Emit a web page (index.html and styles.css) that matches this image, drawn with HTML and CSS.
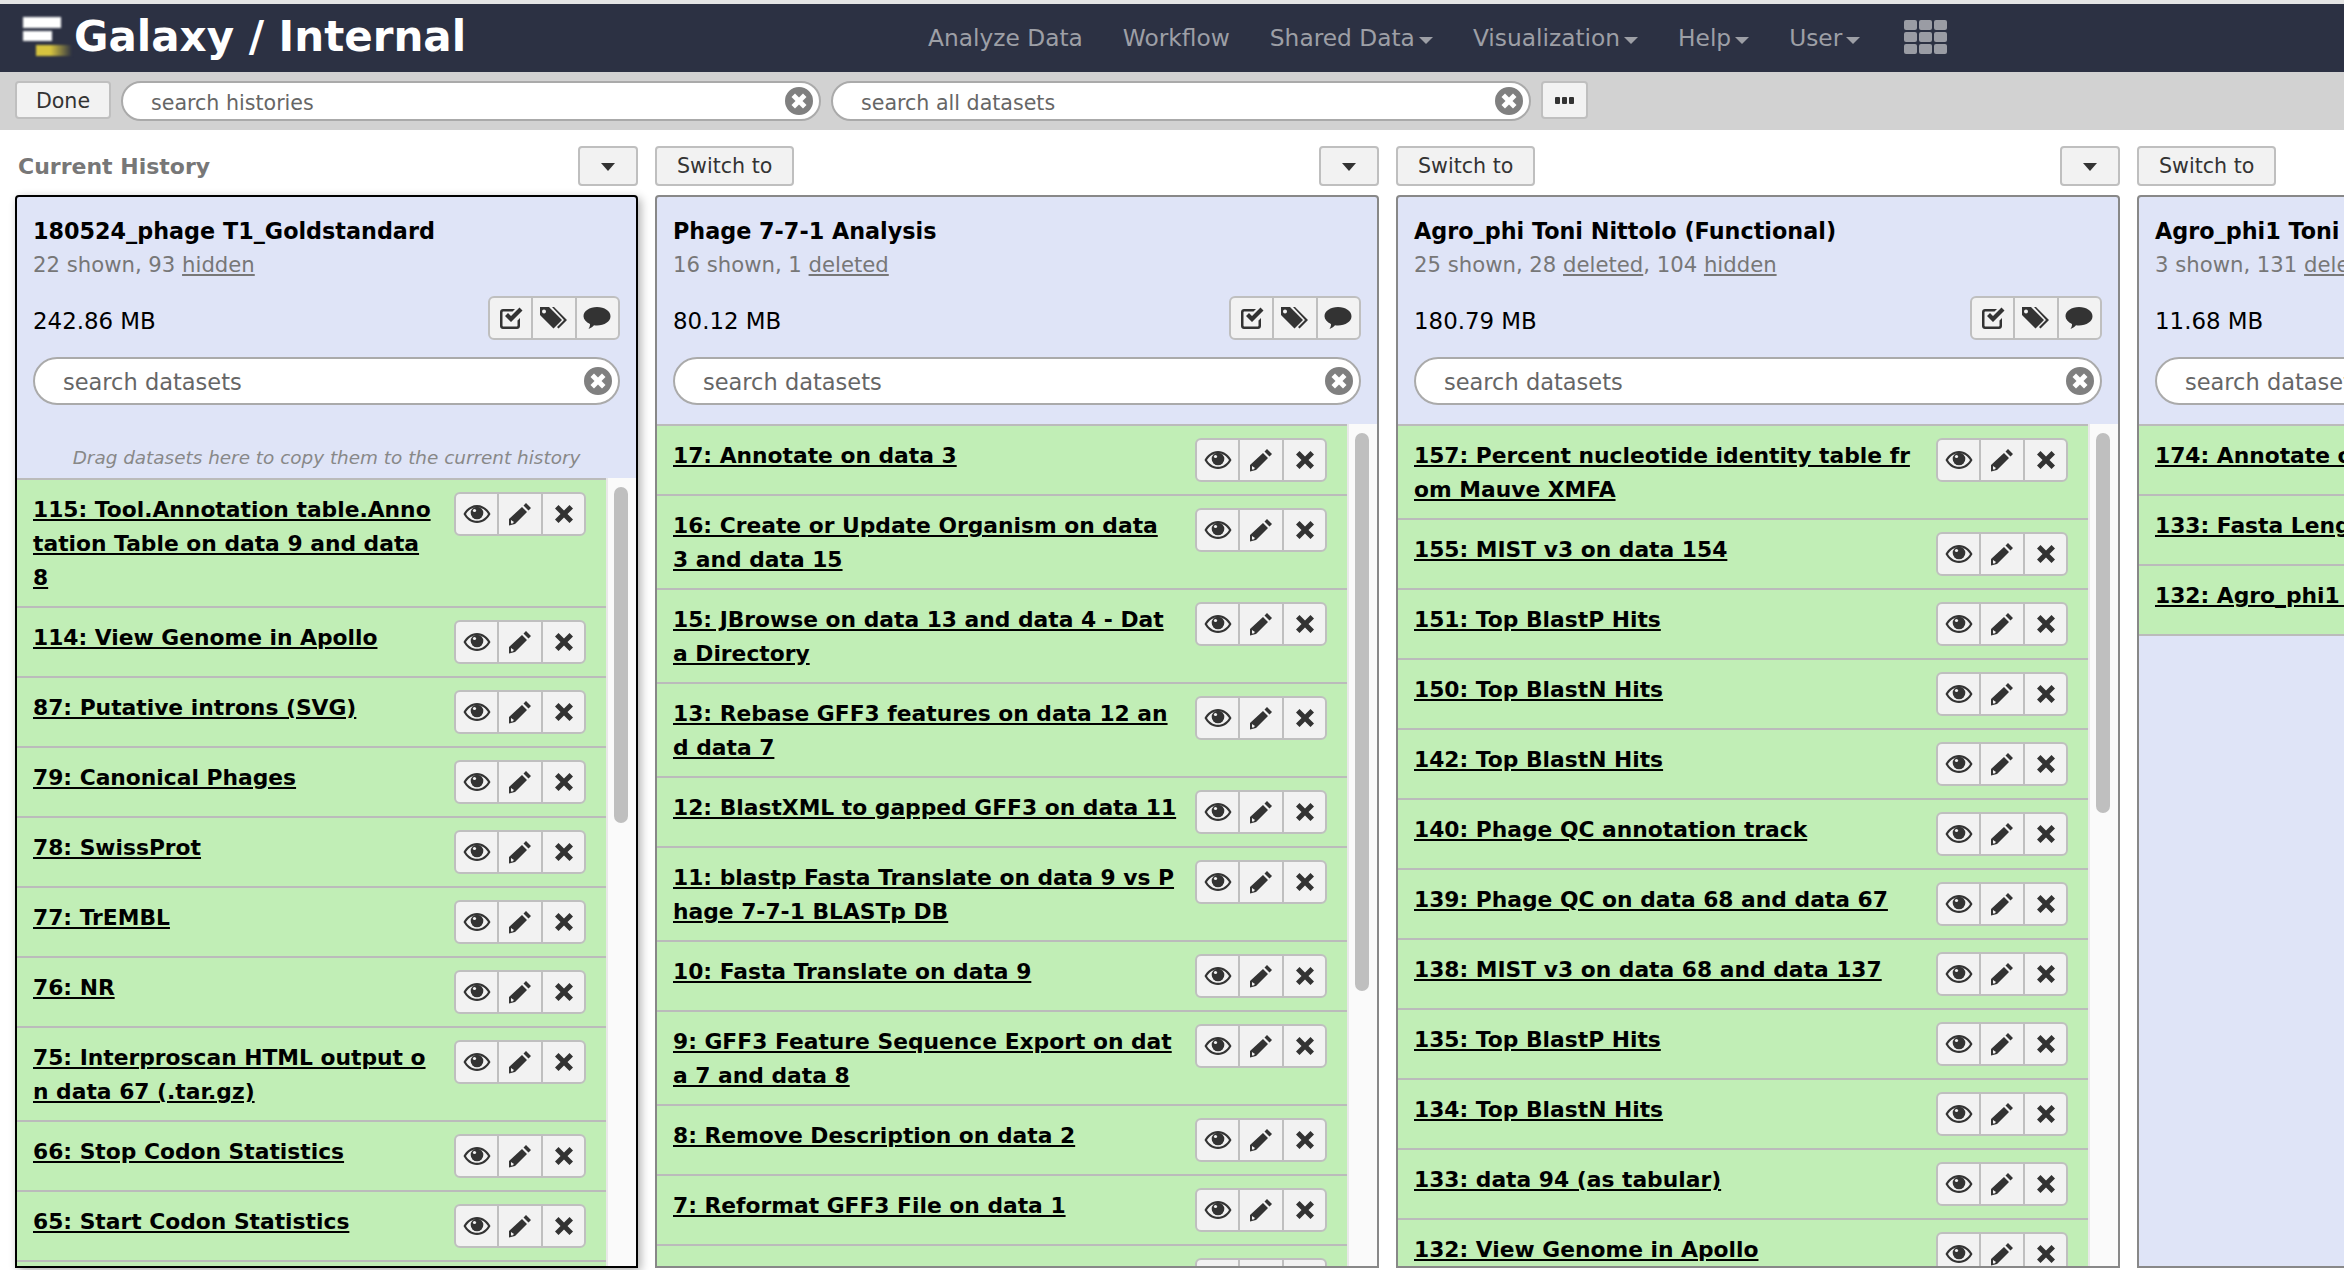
FILE: index.html
```html
<!DOCTYPE html>
<html>
  <head>
    <title>Galaxy / Internal</title>
    <link rel="stylesheet" href="styles.css">
  </head>
  <body>
    <svg class="defs" width="0" height="0">
      <symbol id="i-eye" viewBox="0 0 28 20"><path d="M14 1C8 1 3 5 .5 10 3 15 8 19 14 19s11-4 13.500-9C25 5 20 1 14 1zm0 2.200c5 0 8.800 3 11 6.800-2.200 3.800-6 6.800-11 6.800S5.200 13.800 3 10c2.200-3.800 6-6.800 11-6.800z"/><circle cx="14" cy="9" r="6.300"/><circle cx="11.500" cy="6.500" r="1.600" fill="#f2f2f2"/></symbol>
      <symbol id="i-pencil" viewBox="0 0 24 24"><path d="M18 1l5 5-2.500 2.500-5-5zM14 5l5 5L7 22l-6 1.500V17zM3 18v3.500h1.500l1.500-1.500z"/></symbol>
      <symbol id="i-x" viewBox="0 0 20 20"><path d="M4.500 1L10 6.500 15.500 1 19 4.500 13.500 10l5.500 5.500-3.500 3.500L10 13.500 4.500 19 1 15.500 6.500 10 1 4.500z"/></symbol>
      <symbol id="i-check" viewBox="0 0 24 24"><path d="M4 3h12l-2.500 2.500H4.500c-.6 0-1 .4-1 1v13c0 .6.4 1 1 1h13c.6 0 1-.4 1-1v-5l2.500-2.500v8c0 1.700-1.300 3-3 3H4c-1.700 0-3-1.300-3-3V6c0-1.700 1.300-3 3-3z"/><path d="M6 10l3-3 3 3L20.500 1.500l3 3L12 16z"/></symbol>
      <symbol id="i-tags" viewBox="0 0 30 24"><path d="M1 1h9l13 13-8.500 8.500L1 9zm4 2.500a2 2 0 100 4 2 2 0 000-4z"/><path d="M13 1h2l13 13-8.500 8.500-1.500-1.500 7-7z"/></symbol>
      <symbol id="i-comment" viewBox="0 0 28 24"><path d="M14 1c7.500 0 13.500 4 13.500 9.200S21.500 19.500 14 19.500c-1 0-2 0-3-.2-1.500 1.700-3.500 3-5.500 3.700 1-1.500 1.500-3 1.500-5C3 16 .5 13.300.5 10.200.5 5 6.500 1 14 1z"/></symbol>
      <symbol id="i-clear" viewBox="0 0 28 28"><path fill-rule="evenodd" d="M14 0a14 14 0 110 28 14 14 0 010-28zM10 6.500L6.500 10l4 4-4 4 3.500 3.500 4-4 4 4 3.500-3.500-4-4 4-4L18 6.500l-4 4z"/></symbol>
    </svg>

    <header class="masthead">
      <a class="brand">
        <span class="logo"><i class="bar1"></i><i class="bar2"></i><i class="bar3"></i></span>
        <span class="brand-text">Galaxy / Internal</span>
      </a>
      <nav class="nav">
        <a>Analyze Data</a>
        <a>Workflow</a>
        <a class="drop">Shared Data</a>
        <a class="drop">Visualization</a>
        <a class="drop">Help</a>
        <a class="drop">User</a>
        <span class="grid-icon"><i></i><i></i><i></i><i></i><i></i><i></i><i></i><i></i><i></i></span>
      </nav>
    </header>

    <div class="toolbar">
      <button class="btn done">Done</button>
      <div class="search top-search"><span>search histories</span><svg class="clear"><use href="#i-clear"/></svg></div>
      <div class="search top-search"><span>search all datasets</span><svg class="clear"><use href="#i-clear"/></svg></div>
      <button class="btn dots"><i></i><i></i><i></i></button>
    </div>

    <main class="columns">
      <section class="column first">
        <div class="col-head"><span class="current">Current History</span><button class="btn caret"></button></div>
        <div class="panel active">
          <div class="panel-head">
            <h3>180524_phage T1_Goldstandard</h3>
            <p class="counts">22 shown, 93 <u>hidden</u></p>
            <div class="size-row"><span>242.86 MB</span><div class="acts wide"><b><svg class="i-c"><use href="#i-check"/></svg></b><b><svg class="i-t"><use href="#i-tags"/></svg></b><b><svg class="i-m"><use href="#i-comment"/></svg></b></div></div>
            <div class="search"><span>search datasets</span><svg class="clear"><use href="#i-clear"/></svg></div>
          </div>
          <p class="drag-note">Drag datasets here to copy them to the current history</p>
          <div class="list-wrap">
            <ul class="list">
              <li><a>115: Tool.Annotation table.Anno<br>tation Table on data 9 and data<br>8</a><div class="acts"><b><svg class="i-e"><use href="#i-eye"/></svg></b><b><svg class="i-p"><use href="#i-pencil"/></svg></b><b><svg class="i-x"><use href="#i-x"/></svg></b></div></li>
              <li><a>114: View Genome in Apollo</a><div class="acts"><b><svg class="i-e"><use href="#i-eye"/></svg></b><b><svg class="i-p"><use href="#i-pencil"/></svg></b><b><svg class="i-x"><use href="#i-x"/></svg></b></div></li>
              <li><a>87: Putative introns (SVG)</a><div class="acts"><b><svg class="i-e"><use href="#i-eye"/></svg></b><b><svg class="i-p"><use href="#i-pencil"/></svg></b><b><svg class="i-x"><use href="#i-x"/></svg></b></div></li>
              <li><a>79: Canonical Phages</a><div class="acts"><b><svg class="i-e"><use href="#i-eye"/></svg></b><b><svg class="i-p"><use href="#i-pencil"/></svg></b><b><svg class="i-x"><use href="#i-x"/></svg></b></div></li>
              <li><a>78: SwissProt</a><div class="acts"><b><svg class="i-e"><use href="#i-eye"/></svg></b><b><svg class="i-p"><use href="#i-pencil"/></svg></b><b><svg class="i-x"><use href="#i-x"/></svg></b></div></li>
              <li><a>77: TrEMBL</a><div class="acts"><b><svg class="i-e"><use href="#i-eye"/></svg></b><b><svg class="i-p"><use href="#i-pencil"/></svg></b><b><svg class="i-x"><use href="#i-x"/></svg></b></div></li>
              <li><a>76: NR</a><div class="acts"><b><svg class="i-e"><use href="#i-eye"/></svg></b><b><svg class="i-p"><use href="#i-pencil"/></svg></b><b><svg class="i-x"><use href="#i-x"/></svg></b></div></li>
              <li><a>75: Interproscan HTML output o<br>n data 67 (.tar.gz)</a><div class="acts"><b><svg class="i-e"><use href="#i-eye"/></svg></b><b><svg class="i-p"><use href="#i-pencil"/></svg></b><b><svg class="i-x"><use href="#i-x"/></svg></b></div></li>
              <li><a>66: Stop Codon Statistics</a><div class="acts"><b><svg class="i-e"><use href="#i-eye"/></svg></b><b><svg class="i-p"><use href="#i-pencil"/></svg></b><b><svg class="i-x"><use href="#i-x"/></svg></b></div></li>
              <li><a>65: Start Codon Statistics</a><div class="acts"><b><svg class="i-e"><use href="#i-eye"/></svg></b><b><svg class="i-p"><use href="#i-pencil"/></svg></b><b><svg class="i-x"><use href="#i-x"/></svg></b></div></li>
            </ul>
            <div class="track"><div class="thumb t1"></div></div>
          </div>
        </div>
      </section>

      <section class="column">
        <div class="col-head"><button class="btn">Switch to</button><button class="btn caret"></button></div>
        <div class="panel">
          <div class="panel-head">
            <h3>Phage 7-7-1 Analysis</h3>
            <p class="counts">16 shown, 1 <u>deleted</u></p>
            <div class="size-row"><span>80.12 MB</span><div class="acts wide"><b><svg class="i-c"><use href="#i-check"/></svg></b><b><svg class="i-t"><use href="#i-tags"/></svg></b><b><svg class="i-m"><use href="#i-comment"/></svg></b></div></div>
            <div class="search"><span>search datasets</span><svg class="clear"><use href="#i-clear"/></svg></div>
          </div>
          <div class="list-wrap">
            <ul class="list">
              <li><a>17: Annotate on data 3</a><div class="acts"><b><svg class="i-e"><use href="#i-eye"/></svg></b><b><svg class="i-p"><use href="#i-pencil"/></svg></b><b><svg class="i-x"><use href="#i-x"/></svg></b></div></li>
              <li><a>16: Create or Update Organism on data<br>3 and data 15</a><div class="acts"><b><svg class="i-e"><use href="#i-eye"/></svg></b><b><svg class="i-p"><use href="#i-pencil"/></svg></b><b><svg class="i-x"><use href="#i-x"/></svg></b></div></li>
              <li><a>15: JBrowse on data 13 and data 4 - Dat<br>a Directory</a><div class="acts"><b><svg class="i-e"><use href="#i-eye"/></svg></b><b><svg class="i-p"><use href="#i-pencil"/></svg></b><b><svg class="i-x"><use href="#i-x"/></svg></b></div></li>
              <li><a>13: Rebase GFF3 features on data 12 an<br>d data 7</a><div class="acts"><b><svg class="i-e"><use href="#i-eye"/></svg></b><b><svg class="i-p"><use href="#i-pencil"/></svg></b><b><svg class="i-x"><use href="#i-x"/></svg></b></div></li>
              <li><a>12: BlastXML to gapped GFF3 on data 11</a><div class="acts"><b><svg class="i-e"><use href="#i-eye"/></svg></b><b><svg class="i-p"><use href="#i-pencil"/></svg></b><b><svg class="i-x"><use href="#i-x"/></svg></b></div></li>
              <li><a>11: blastp Fasta Translate on data 9 vs P<br>hage 7-7-1 BLASTp DB</a><div class="acts"><b><svg class="i-e"><use href="#i-eye"/></svg></b><b><svg class="i-p"><use href="#i-pencil"/></svg></b><b><svg class="i-x"><use href="#i-x"/></svg></b></div></li>
              <li><a>10: Fasta Translate on data 9</a><div class="acts"><b><svg class="i-e"><use href="#i-eye"/></svg></b><b><svg class="i-p"><use href="#i-pencil"/></svg></b><b><svg class="i-x"><use href="#i-x"/></svg></b></div></li>
              <li><a>9: GFF3 Feature Sequence Export on dat<br>a 7 and data 8</a><div class="acts"><b><svg class="i-e"><use href="#i-eye"/></svg></b><b><svg class="i-p"><use href="#i-pencil"/></svg></b><b><svg class="i-x"><use href="#i-x"/></svg></b></div></li>
              <li><a>8: Remove Description on data 2</a><div class="acts"><b><svg class="i-e"><use href="#i-eye"/></svg></b><b><svg class="i-p"><use href="#i-pencil"/></svg></b><b><svg class="i-x"><use href="#i-x"/></svg></b></div></li>
              <li><a>7: Reformat GFF3 File on data 1</a><div class="acts"><b><svg class="i-e"><use href="#i-eye"/></svg></b><b><svg class="i-p"><use href="#i-pencil"/></svg></b><b><svg class="i-x"><use href="#i-x"/></svg></b></div></li>
              <li><a>6: Compute sequence length</a><div class="acts"><b><svg class="i-e"><use href="#i-eye"/></svg></b><b><svg class="i-p"><use href="#i-pencil"/></svg></b><b><svg class="i-x"><use href="#i-x"/></svg></b></div></li>
            </ul>
            <div class="track"><div class="thumb t2"></div></div>
          </div>
        </div>
      </section>

      <section class="column">
        <div class="col-head"><button class="btn">Switch to</button><button class="btn caret"></button></div>
        <div class="panel">
          <div class="panel-head">
            <h3>Agro_phi Toni Nittolo (Functional)</h3>
            <p class="counts">25 shown, 28 <u>deleted</u>, 104 <u>hidden</u></p>
            <div class="size-row"><span>180.79 MB</span><div class="acts wide"><b><svg class="i-c"><use href="#i-check"/></svg></b><b><svg class="i-t"><use href="#i-tags"/></svg></b><b><svg class="i-m"><use href="#i-comment"/></svg></b></div></div>
            <div class="search"><span>search datasets</span><svg class="clear"><use href="#i-clear"/></svg></div>
          </div>
          <div class="list-wrap">
            <ul class="list">
              <li><a>157: Percent nucleotide identity table fr<br>om Mauve XMFA</a><div class="acts"><b><svg class="i-e"><use href="#i-eye"/></svg></b><b><svg class="i-p"><use href="#i-pencil"/></svg></b><b><svg class="i-x"><use href="#i-x"/></svg></b></div></li>
              <li><a>155: MIST v3 on data 154</a><div class="acts"><b><svg class="i-e"><use href="#i-eye"/></svg></b><b><svg class="i-p"><use href="#i-pencil"/></svg></b><b><svg class="i-x"><use href="#i-x"/></svg></b></div></li>
              <li><a>151: Top BlastP Hits</a><div class="acts"><b><svg class="i-e"><use href="#i-eye"/></svg></b><b><svg class="i-p"><use href="#i-pencil"/></svg></b><b><svg class="i-x"><use href="#i-x"/></svg></b></div></li>
              <li><a>150: Top BlastN Hits</a><div class="acts"><b><svg class="i-e"><use href="#i-eye"/></svg></b><b><svg class="i-p"><use href="#i-pencil"/></svg></b><b><svg class="i-x"><use href="#i-x"/></svg></b></div></li>
              <li><a>142: Top BlastN Hits</a><div class="acts"><b><svg class="i-e"><use href="#i-eye"/></svg></b><b><svg class="i-p"><use href="#i-pencil"/></svg></b><b><svg class="i-x"><use href="#i-x"/></svg></b></div></li>
              <li><a>140: Phage QC annotation track</a><div class="acts"><b><svg class="i-e"><use href="#i-eye"/></svg></b><b><svg class="i-p"><use href="#i-pencil"/></svg></b><b><svg class="i-x"><use href="#i-x"/></svg></b></div></li>
              <li><a>139: Phage QC on data 68 and data 67</a><div class="acts"><b><svg class="i-e"><use href="#i-eye"/></svg></b><b><svg class="i-p"><use href="#i-pencil"/></svg></b><b><svg class="i-x"><use href="#i-x"/></svg></b></div></li>
              <li><a>138: MIST v3 on data 68 and data 137</a><div class="acts"><b><svg class="i-e"><use href="#i-eye"/></svg></b><b><svg class="i-p"><use href="#i-pencil"/></svg></b><b><svg class="i-x"><use href="#i-x"/></svg></b></div></li>
              <li><a>135: Top BlastP Hits</a><div class="acts"><b><svg class="i-e"><use href="#i-eye"/></svg></b><b><svg class="i-p"><use href="#i-pencil"/></svg></b><b><svg class="i-x"><use href="#i-x"/></svg></b></div></li>
              <li><a>134: Top BlastN Hits</a><div class="acts"><b><svg class="i-e"><use href="#i-eye"/></svg></b><b><svg class="i-p"><use href="#i-pencil"/></svg></b><b><svg class="i-x"><use href="#i-x"/></svg></b></div></li>
              <li><a>133: data 94 (as tabular)</a><div class="acts"><b><svg class="i-e"><use href="#i-eye"/></svg></b><b><svg class="i-p"><use href="#i-pencil"/></svg></b><b><svg class="i-x"><use href="#i-x"/></svg></b></div></li>
              <li><a>132: View Genome in Apollo</a><div class="acts"><b><svg class="i-e"><use href="#i-eye"/></svg></b><b><svg class="i-p"><use href="#i-pencil"/></svg></b><b><svg class="i-x"><use href="#i-x"/></svg></b></div></li>
            </ul>
            <div class="track"><div class="thumb t3"></div></div>
          </div>
        </div>
      </section>

      <section class="column">
        <div class="col-head"><button class="btn">Switch to</button></div>
        <div class="panel">
          <div class="panel-head">
            <h3>Agro_phi1 Toni Nittolo</h3>
            <p class="counts">3 shown, 131 <u>deleted</u></p>
            <div class="size-row"><span>11.68 MB</span></div>
            <div class="search"><span>search datasets</span></div>
          </div>
          <ul class="list">
            <li><a>174: Annotate on data 3</a></li>
            <li><a>133: Fasta Length on data 3</a></li>
            <li><a>132: Agro_phi1 Toni Nittolo</a></li>
          </ul>
        </div>
      </section>
    </main>
  </body>
</html>
```

FILE: styles.css
```css
* {
  box-sizing: border-box;
}
body {
  margin: 0;
  height: 1270px;
  overflow: hidden;
  background: #fff;
  color: #000;
  font-family: "DejaVu Sans", sans-serif;
  font-size: 20px;
  border-top: 4px solid #e4e4e4;
}
.defs {
  display: block;
}

/* masthead */
.masthead {
  display: flex;
  align-items: center;
  height: 68px;
  background: #2c3143;
}
.brand {
  display: flex;
  align-items: center;
  width: 928px;
  padding-left: 23px;
}
.logo {
  position: relative;
  width: 51px;
  height: 42px;
  flex: none;
}
.logo i {
  position: absolute;
  display: block;
  filter: blur(1px);
}
.bar1 {
  left: 0;
  top: 0;
  width: 38px;
  height: 11px;
  background: #fff;
}
.bar2 {
  left: 0;
  top: 14px;
  width: 29px;
  height: 10px;
  background: #fff;
}
.bar3 {
  left: 13px;
  top: 28px;
  width: 36px;
  height: 11px;
  background: linear-gradient(to right, #d6c33f 40%, #2c3143);
}
.brand-text {
  margin-top: -3px;
  color: #fff;
  font-weight: bold;
  font-size: 42px;
  white-space: nowrap;
}
.nav {
  display: flex;
  align-items: center;
  gap: 40px;
}
.nav a {
  margin-top: -2px;
  color: #9d9fa6;
  font-size: 23.300px;
  white-space: nowrap;
}
.drop::after {
  content: "";
  display: inline-block;
  margin-left: 4px;
  vertical-align: 2px;
  border: 7.500px solid transparent;
  border-top-color: #9d9fa6;
  border-bottom: 0;
}
.grid-icon {
  display: grid;
  grid-template-columns: repeat(3, 13px);
  grid-auto-rows: 10px;
  gap: 2px;
  margin: -2px 0 0 4px;
}
.grid-icon i {
  background: #9a9ca4;
  border-radius: 2px;
}

/* buttons */
.btn {
  height: 40px;
  padding: 0 20px;
  background: #f2f2f2;
  border: 2px solid #bfbfbf;
  border-radius: 4px;
  color: #333;
  font: 20.600px "DejaVu Sans", sans-serif;
}
.caret {
  width: 60px;
  padding: 0;
  margin-left: auto;
}
.caret::after {
  content: "";
  display: inline-block;
  vertical-align: middle;
  border: 7px solid transparent;
  border-top: 8px solid #333;
  border-bottom: 0;
}

/* toolbar */
.toolbar {
  display: flex;
  align-items: flex-start;
  gap: 10px;
  height: 58px;
  padding: 9px 15px 0;
  background: #d2d2d2;
}
.done {
  width: 96px;
  padding: 2px 0 0;
  height: 38px;
}
.search {
  display: flex;
  align-items: center;
  justify-content: space-between;
  height: 48px;
  padding: 0 6px 0 28px;
  background: #fff;
  border: 2px solid #aaa;
  border-radius: 25px;
  color: #666;
  font-size: 22.500px;
}
.search span {
  padding-top: 1px;
}
.top-search {
  width: 700px;
  height: 40px;
  font-size: 20.600px;
}
.top-search span {
  padding-top: 3px;
}
.clear {
  width: 28px;
  height: 28px;
  fill: #808080;
  flex: none;
}
.dots {
  display: flex;
  align-items: center;
  justify-content: center;
  gap: 2px;
  width: 47px;
  height: 38px;
  padding: 0;
}
.dots i {
  width: 5px;
  height: 7px;
  background: #333;
  border-radius: 1px;
}

/* columns */
.columns {
  display: flex;
  gap: 17px;
  padding: 16px 0 0 15px;
}
.column {
  display: flex;
  flex-direction: column;
  flex: none;
  width: 724px;
}
.column.first {
  width: 623px;
}
.col-head {
  display: flex;
  align-items: center;
  height: 40px;
  margin-bottom: 9px;
}
.current {
  padding-left: 3px;
  color: #777;
  font-weight: bold;
  font-size: 22px;
}
.panel {
  flex: none;
  height: 1073px;
  background: #dfe4f7;
  border: 2px solid #888;
  border-radius: 4px 4px 0 0;
  overflow: hidden;
}
.panel.active {
  border-color: #000;
  box-shadow: 3px 3px 10px rgba(0, 0, 0, 0.3);
}
.panel-head {
  padding: 17px 16px 0;
  height: 227px;
}
.panel.active .panel-head {
  height: auto;
}
h3 {
  margin: 0;
  font-size: 22.300px;
  line-height: 34px;
  font-weight: bold;
}
.counts {
  margin: 0;
  padding-top: 1px;
  color: #777;
  font-size: 21.200px;
  line-height: 32px;
}
.size-row {
  display: flex;
  align-items: center;
  justify-content: space-between;
  height: 43px;
  margin: 15px 0 18px;
  font-size: 22.900px;
}
.size-row > span {
  padding-top: 6px;
}

/* icon button groups */
.acts {
  display: flex;
  flex: none;
  width: 132px;
  height: 44px;
  margin: -1px 0 0 auto;
  background: #f2f2f2;
  border: 2px solid #bfbfbf;
  border-radius: 6px;
}
.size-row .acts {
  margin-top: 0;
}
.acts b {
  display: flex;
  align-items: center;
  justify-content: center;
  flex: 1;
}
.acts b + b {
  border-left: 2px solid #bfbfbf;
}
.acts svg {
  fill: #333;
}
.i-e {
  width: 28px;
  height: 20px;
}
.i-p {
  width: 24px;
  height: 24px;
  margin-left: 1px;
}
.i-x {
  width: 20px;
  height: 20px;
  margin-left: 2px;
}
.i-c {
  width: 24px;
  height: 24px;
}
.i-t {
  width: 30px;
  height: 24px;
}
.i-m {
  width: 28px;
  height: 24px;
}

.drag-note {
  margin: 0;
  padding: 38px 0 5px;
  text-align: center;
  color: #888;
  font-style: italic;
  font-size: 18.400px;
  line-height: 30px;
}

/* dataset list */
.list-wrap {
  display: flex;
  height: 100%;
}
.list {
  margin: 0;
  padding: 0;
  list-style: none;
  background: #c1eeb6;
  border-top: 2px solid #bbb;
}
.list-wrap .list {
  flex: none;
  width: 589px;
}
.column:not(.first) .list-wrap .list {
  width: 690px;
}
.list li {
  display: flex;
  align-items: flex-start;
  min-height: 70px;
  padding: 13px 20px 11px 16px;
  border-bottom: 2px solid #bbb;
}
.list a {
  min-width: 0;
  color: #000;
  font-weight: bold;
  font-size: 21.800px;
  line-height: 34px;
  text-decoration: underline;
  white-space: nowrap;
}
.track {
  flex: 1;
  padding: 9px 8px 0 6px;
  background: #fafafa;
  border-left: 2px solid #e8e8e8;
}
.thumb {
  background: #bfbfbf;
  border-radius: 8px;
}
.t1 {
  height: 336px;
}
.t2 {
  height: 558px;
}
.t3 {
  height: 380px;
}
```
